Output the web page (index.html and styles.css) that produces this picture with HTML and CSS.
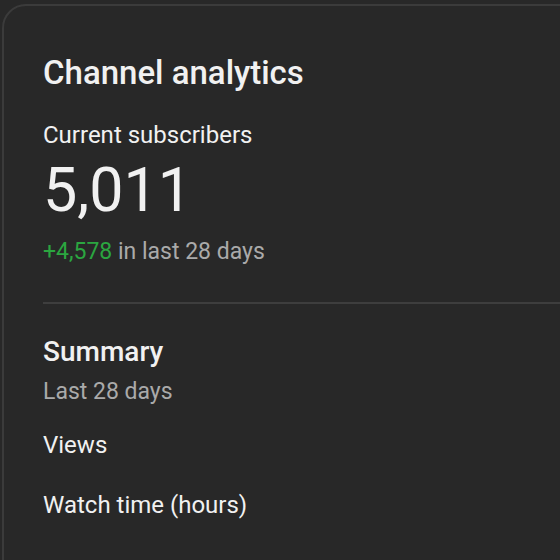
FILE: index.html
```html
<!DOCTYPE html>
<html lang="en">
<head>
  <meta charset="UTF-8" />
  <meta name="viewport" content="width=device-width, initial-scale=1.0"/>
  <title>Channel analytics</title>
  <link rel="stylesheet" href="styles.css">
</head>
<body>

  <div class="card">
    <h1 class="card-title">Channel analytics</h1>

    <div class="subs">
      <p class="label">Current subscribers</p>
      <p class="big-number">5,011</p>
      <p class="delta"><span class="up">+4,578</span> in last 28 days</p>
    </div>

    <hr class="divider">

    <div class="summary">
      <h2>Summary</h2>
      <p class="period">Last 28 days</p>
      <p class="metric first">Views</p>
      <p class="metric">Watch time (hours)</p>
    </div>
  </div>

</body>
</html>
```

FILE: styles.css
```css
html, body {
  overflow: hidden;
}

body {
  font-family: Roboto, 'Noto Sans', sans-serif;
  margin: 0;
  background-color: #282828;
  color: #f1f1f1;
}

.card {
  width: 720px;
  height: 620px;
  margin: 4px 0 0 2px;
  padding: 47px 0 0 39px;
  border: 2px solid #3b3b3b;
  border-radius: 24px;
  box-sizing: border-box;
}

.card-title {
  font-size: 33px;
  font-weight: 500;
  line-height: 40px;
  margin: 0;
}

p {
  margin: 0;
}

.label {
  font-size: 24px;
  line-height: 30px;
  margin-top: 27px;
}

.big-number {
  font-size: 61px;
  line-height: 68px;
  margin-top: 6px;
}

.delta {
  font-size: 23px;
  line-height: 30px;
  margin-top: 13px;
  color: #aaaaaa;
}

.up {
  color: #2ba640;
}

.divider {
  border: none;
  height: 2px;
  background-color: #3e3e3e;
  margin: 35px 0 0 0;
}

.summary h2 {
  font-size: 28px;
  font-weight: 500;
  line-height: 34px;
  margin: 31px 0 0 0;
}

.period {
  font-size: 23px;
  line-height: 30px;
  margin-top: 8px;
  color: #aaaaaa;
}

.metric {
  font-size: 24px;
  line-height: 30px;
  margin-top: 30px;
}

.metric.first {
  margin-top: 23px;
}
```
